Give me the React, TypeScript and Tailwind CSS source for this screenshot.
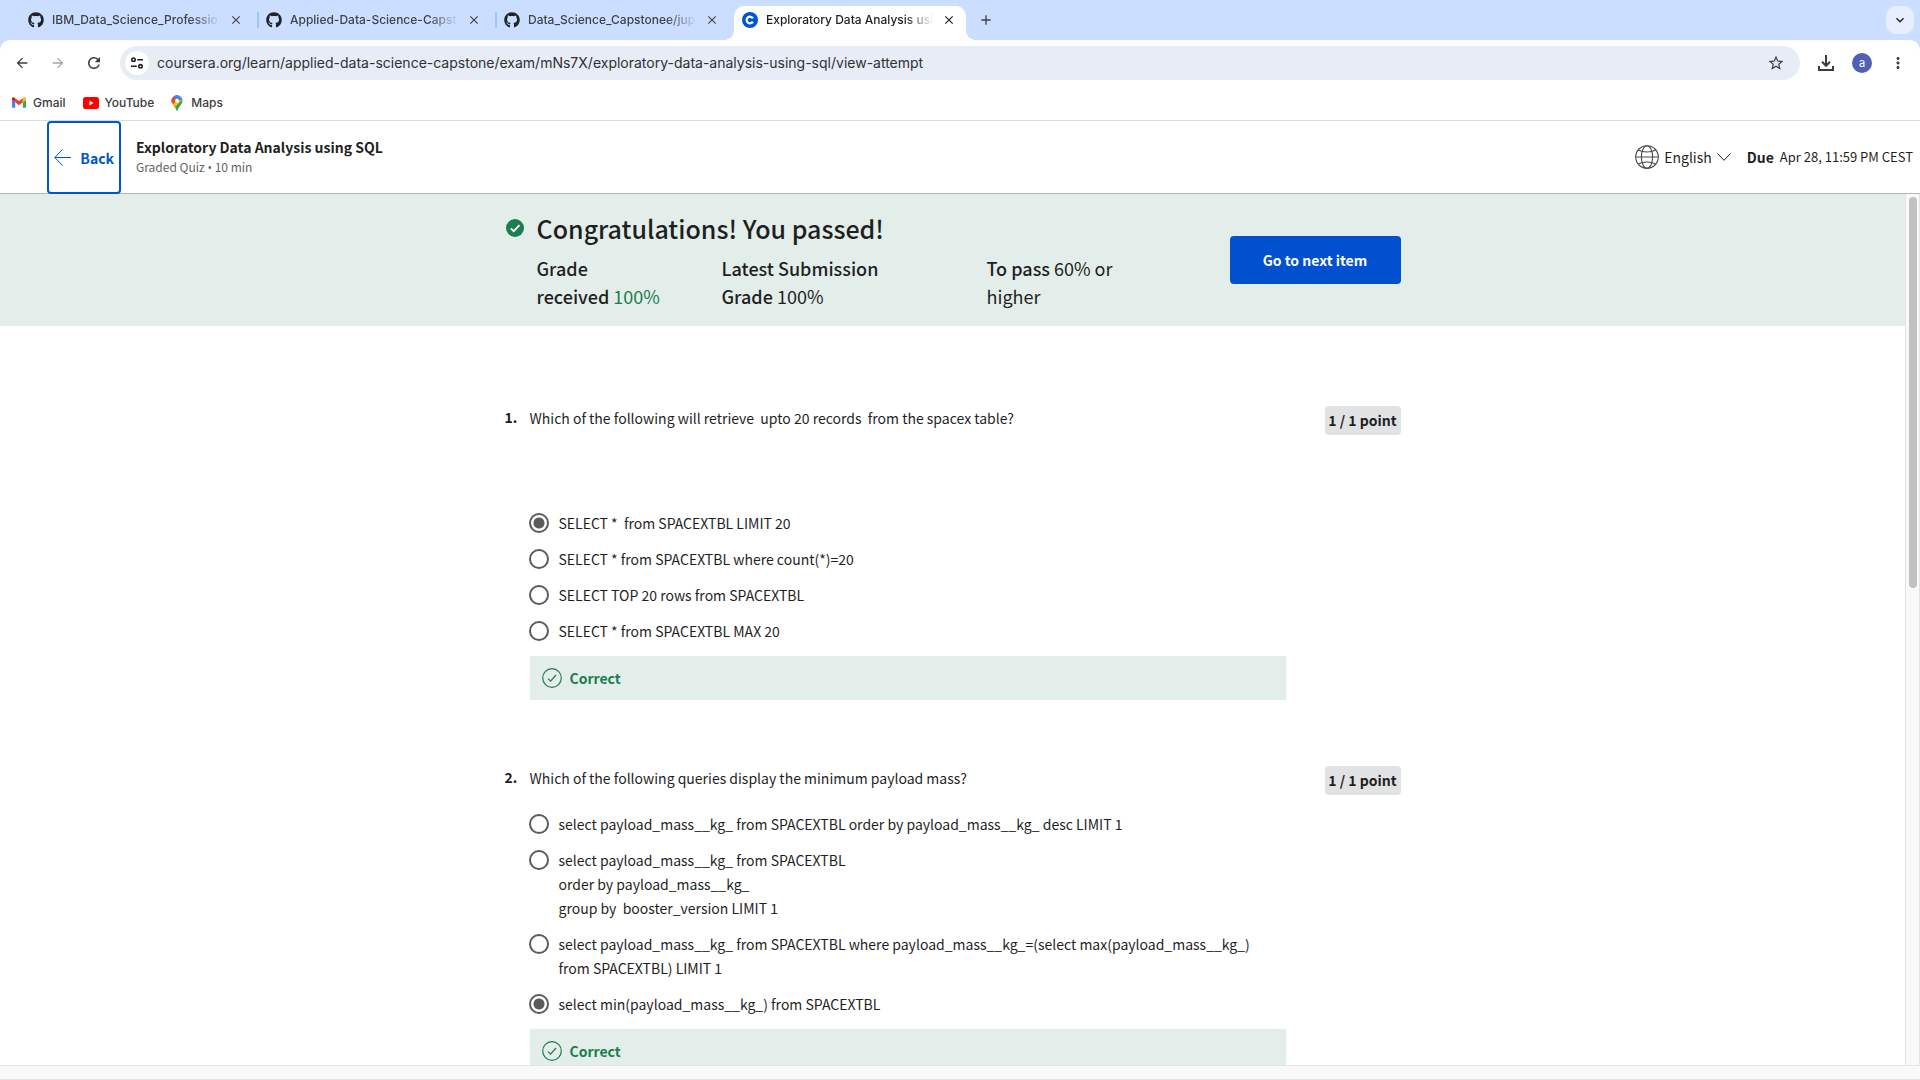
import type { ReactNode } from "react";
import { FaGithub } from "react-icons/fa";
import {
  MdArrowBack,
  MdArrowForward,
  MdClose,
  MdAdd,
  MdRefresh,
  MdMoreVert,
  MdStarBorder,
  MdKeyboardArrowDown,
} from "react-icons/md";

function CourseraIcon() {
  return (
    <svg viewBox="0 0 16 16" className="size-4 shrink-0">
      <circle cx="8" cy="8" r="8" fill="#0056d2" />
      <path d="M10.9 9.6A3.3 3.3 0 1 1 10.9 6.4" fill="none" stroke="#fff" strokeWidth="2.3" />
    </svg>
  );
}

function GmailIcon() {
  return (
    <svg viewBox="52 42 88 66" className="h-[11px] w-3.5">
      <path fill="#4285f4" d="M58 108h14V74L52 59v43c0 3.32 2.69 6 6 6" />
      <path fill="#34a853" d="M120 108h14c3.32 0 6-2.69 6-6V59l-20 15" />
      <path fill="#fbbc04" d="M120 48v26l20-15v-8c0-7.42-8.47-11.65-14.4-7.2" />
      <path fill="#ea4335" d="M72 74V48l24 18 24-18v26L96 92" />
      <path fill="#c5221f" d="M52 51v8l20 15V48l-5.6-4.2c-5.94-4.45-14.4-.22-14.4 7.2" />
    </svg>
  );
}

function YoutubeIcon() {
  return (
    <svg viewBox="0 0 16 12" className="h-3 w-4">
      <rect width="16" height="12" rx="2.8" fill="#f00" />
      <path d="M6.4 3.6v4.8L10.5 6z" fill="#fff" />
    </svg>
  );
}

function MapsIcon() {
  return (
    <svg viewBox="0 0 12 16" className="h-4 w-3">
      <defs>
        <clipPath id="pin">
          <path d="M6 .3a5.5 5.5 0 0 1 5.5 5.5c0 2.2-1.2 3.5-2.4 5C7.8 12.4 7.2 13.6 6.8 15.1c-.2.9-1.4.9-1.6 0C4.8 13.6 4.2 12.4 2.9 10.8 1.7 9.3.5 8 .5 5.8A5.5 5.5 0 0 1 6 .3z" />
        </clipPath>
      </defs>
      <g clipPath="url(#pin)">
        <rect width="12" height="16" fill="#34a853" />
        <path d="M-1 10.5 7 1l5 3-9.5 9.5z" fill="#fbbc04" />
        <path d="M-1-1h9L0 8.5z" fill="#ea4335" />
        <path d="M3-1h10v5L8 5.8 2.5 1.8z" fill="#4285f4" />
        <path d="M-1 2 1.8 1.8 6 5 2 9z" fill="#ea4335" />
      </g>
      <circle cx="6" cy="5.8" r="2" fill="#fff" />
    </svg>
  );
}

function TuneIcon() {
  return (
    <svg viewBox="0 0 14 14" className="size-3.5" fill="none" stroke="#1f1f1f" strokeWidth="1.6">
      <circle cx="3.5" cy="3.7" r="1.7" />
      <path d="M7.2 3.7H13M1 10.3h5.8" />
      <circle cx="10.5" cy="10.3" r="1.7" />
    </svg>
  );
}

function DownloadIcon() {
  return (
    <svg viewBox="0 0 16 16" className="size-4" fill="none" stroke="#3c3c3c" strokeWidth="2">
      <path d="M8 0v10.5M4 6.8l4 4 4-4M1 11v4h14v-4" />
    </svg>
  );
}

function GlobeIcon() {
  return (
    <svg viewBox="0 0 24 24" className="size-6" fill="none" stroke="#4a4a4a" strokeWidth="1.1">
      <circle cx="12" cy="12" r="11.3" />
      <ellipse cx="12" cy="12" rx="5.6" ry="11.3" />
      <path d="M.7 12h22.6M3.3 5c2.5 1.4 5.4 2 8.7 2s6.2-.6 8.7-2M3.3 19c2.5-1.4 5.4-2 8.7-2s6.2.6 8.7 2" />
    </svg>
  );
}

function CorrectIcon() {
  return (
    <svg viewBox="0 0 20 20" className="size-5 shrink-0" fill="none" stroke="#1d7c50" strokeWidth="1.2">
      <circle cx="10" cy="10" r="9.3" />
      <path d="m6 10.6 2.6 2.5L14 7" />
    </svg>
  );
}

const tabs = ["IBM_Data_Science_Professio", "Applied-Data-Science-Capst", "Data_Science_Capstonee/jup"];

const fade = "min-w-0 flex-1 overflow-hidden whitespace-nowrap text-left [mask-image:linear-gradient(to_right,#000_82%,transparent)]";

function TabStrip() {
  return (
    <div className="flex h-10 items-end bg-[#ccdeff] pl-5 pr-1.5 text-xs font-medium text-[#3f4246]">
      {tabs.map((t, i) => (
        <div key={t} className="flex h-full w-[238px] items-center">
          <button className="flex min-w-0 flex-1 items-center gap-2 pl-2">
            <FaGithub className="size-4 shrink-0 text-[#1f2328]" />
            <span className={fade}>{t}</span>
          </button>
          <button aria-label="Close tab" className="ml-2 mr-3.5">
            <MdClose className="size-3.5" />
          </button>
          <span className={i < 2 ? "-mr-px h-4 w-0.5 bg-[#a0c4ff]" : "w-px"} />
        </div>
      ))}
      <div className="relative flex h-[34px] w-[232px] items-center rounded-t-[10px] bg-white pb-1.5 text-[#1f1f1f]">
        <span className="absolute -left-2.5 bottom-0 size-2.5 bg-[radial-gradient(circle_at_0_0,#ccdeff_10px,#fff_10px)]" />
        <span className="absolute -right-2.5 bottom-0 size-2.5 bg-[radial-gradient(circle_at_100%_0,#ccdeff_10px,#fff_10px)]" />
        <button className="flex min-w-0 flex-1 items-center gap-2 pl-2">
          <CourseraIcon />
          <span className={fade}>Exploratory Data Analysis usi</span>
        </button>
        <button aria-label="Close tab" className="ml-2 mr-2.5">
          <MdClose className="size-3.5" />
        </button>
      </div>
      <button aria-label="New tab" className="flex h-full items-center pl-3">
        <MdAdd className="size-4" />
      </button>
      <button aria-label="Search tabs" className="mb-1.5 ml-auto flex size-7 items-center justify-center rounded-[10px] bg-[#e7efff] text-[#1f1f1f]">
        <MdKeyboardArrowDown className="size-4" />
      </button>
    </div>
  );
}

function Toolbar() {
  return (
    <div className="bg-[#ccdeff]">
      <div className="flex items-center rounded-t-[10px] bg-white pb-1.5 pl-3.5 pr-[13px] pt-1.5 text-[#3c3c3c]">
        <button aria-label="Back" className="mr-5">
          <MdArrowBack className="size-4" />
        </button>
        <button aria-label="Forward" className="mr-[19px] text-[#a3a5a8]">
          <MdArrowForward className="size-4" />
        </button>
        <button aria-label="Reload" className="mr-[17px]">
          <MdRefresh className="size-[18px]" />
        </button>
        <div className="flex h-[34px] flex-1 items-center rounded-full bg-[#e8ecf6] pl-[5px] pr-[15px]">
          <button aria-label="Site information" className="flex size-6 items-center justify-center rounded-full bg-white">
            <TuneIcon />
          </button>
          <input
            aria-label="Address"
            defaultValue="coursera.org/learn/applied-data-science-capstone/exam/mNs7X/exploratory-data-analysis-using-sql/view-attempt"
            className="ml-2 min-w-0 flex-1 bg-transparent text-sm text-[#2f3134] outline-none"
          />
          <button aria-label="Bookmark">
            <MdStarBorder className="size-[18px]" />
          </button>
        </div>
        <button aria-label="Downloads" className="ml-[18px]">
          <DownloadIcon />
        </button>
        <button className="ml-[18px] size-5 rounded-full bg-[#4f60b5] text-center text-[11px] leading-5 text-white">a</button>
        <button aria-label="Menu" className="ml-[17px]">
          <MdMoreVert className="size-[18px]" />
        </button>
      </div>
    </div>
  );
}

function Bookmarks() {
  return (
    <nav className="flex h-[35px] items-center gap-[17px] border-b border-[#dadce0] bg-white pb-px pl-3 text-xs font-medium text-[#3c3c3c]">
      <a href="#gmail" className="flex items-center gap-[7px]">
        <GmailIcon />
        Gmail
      </a>
      <a href="#youtube" className="flex items-center gap-1.5">
        <YoutubeIcon />
        YouTube
      </a>
      <a href="#maps" className="flex items-center gap-2">
        <MapsIcon />
        Maps
      </a>
    </nav>
  );
}

function CourseHeader() {
  return (
    <header className="flex h-[73px] items-stretch border-b border-[#b4b6b8] bg-white pl-[47px] pr-[7px]">
      <button className="-mb-px flex w-[74px] items-center justify-between rounded border-2 border-[#0056d2] px-[5px] text-sm font-bold text-[#0056d2]">
        <svg viewBox="0 0 17 17" className="size-[17px]" fill="none" stroke="currentColor" strokeWidth="1">
          <path d="M8.5.5.8 8.5l7.7 8M.8 8.5H17" />
        </svg>
        Back
      </button>
      <div className="ml-[15px] flex flex-col justify-center">
        <h2 className="text-sm font-bold leading-5">Exploratory Data Analysis using SQL</h2>
        <p className="text-xs leading-[19px] text-[#636363]">
          Graded Quiz <span className="font-['Open_Sans',sans-serif]">•</span> 10 min
        </p>
      </div>
      <div className="ml-auto flex items-center">
        <button className="flex items-center gap-[5px] text-sm">
          <GlobeIcon />
          English
          <svg viewBox="0 0 14 8" className="h-2 w-3.5" fill="none" stroke="#1f1f1f" strokeWidth="1">
            <path d="m.5.5 6.5 6.8L13.5.5" />
          </svg>
        </button>
        <span className="ml-4 text-sm font-bold">Due</span>
        <span className="ml-1.5 text-[13px]">Apr 28, 11:59 PM CEST</span>
      </div>
    </header>
  );
}

function Banner() {
  return (
    <section className="bg-[#e3eeea]">
      <div className="mx-auto flex max-w-[896px] pb-4 pt-4">
        <svg viewBox="0 0 18 18" className="ml-px mr-[13px] mt-[9px] size-[18px] shrink-0">
          <circle cx="9" cy="9" r="9" fill="#1d7c50" />
          <path d="m4.8 9.3 2.9 2.9 5.8-6" fill="none" stroke="#fff" strokeWidth="1.8" />
        </svg>
        <div className="flex-1">
          <h1 className="text-[25px] font-medium leading-9">Congratulations! You passed!</h1>
          <div className="mt-2 flex text-lg leading-7">
            <p className="w-[185px]">
              <b className="font-medium">
                Grade
                <br />
                received
              </b>{" "}
              <span className="text-[#1d7c50]">100%</span>
            </p>
            <p className="w-[265px]">
              <b className="font-medium">
                Latest Submission
                <br />
                Grade
              </b>{" "}
              100%
            </p>
            <p>
              <b className="font-medium">To pass</b> 60% or
              <br />
              higher
            </p>
          </div>
        </div>
        <button className="mt-[26px] h-12 w-[171px] rounded bg-[#0050d0] text-sm font-bold text-white">Go to next item</button>
      </div>
    </section>
  );
}

function Option({ name, checked, children }: { name: string; checked?: boolean; children: ReactNode }) {
  return (
    <label className="flex gap-2.5">
      <input
        type="radio"
        name={name}
        defaultChecked={checked}
        className="-ml-px mt-0.5 size-5 shrink-0 appearance-none rounded-full border-2 border-[#5b5b5b] bg-white checked:bg-[radial-gradient(circle,#5b5b5b_5px,#fff_6px)]"
      />
      <span className="whitespace-pre-wrap">{children}</span>
    </label>
  );
}

function Question({ n, title, spaced, children }: { n: number; title: string; spaced?: boolean; children: ReactNode }) {
  return (
    <section className="mx-auto flex w-full max-w-[896px] text-sm leading-6">
      <span className="w-[25px] shrink-0 font-bold leading-[22px]">{n}.</span>
      <div className="w-[756px]">
        <h3 className={spaced ? "mb-[81px] whitespace-pre" : "mb-[22px] whitespace-pre"}>{title}</h3>
        <div className="flex flex-col gap-3 pr-4">{children}</div>
        <div className="mt-[13px] flex h-11 items-center gap-2 bg-[#e3eeea] pl-3 font-bold text-[#1d7c50]">
          <CorrectIcon />
          Correct
        </div>
      </div>
      <span className="ml-auto h-[29px] w-[76px] rounded bg-[#e1e2e4] text-center font-bold leading-[29px]">1 / 1 point</span>
    </section>
  );
}

export default function App() {
  return (
    <div className="flex h-screen flex-col overflow-hidden bg-white font-['Inter',sans-serif] text-[#1f1f1f]">
      <TabStrip />
      <Toolbar />
      <Bookmarks />
      <div className="flex min-h-0 flex-1 flex-col font-['Noto_Sans_CJK_SC',sans-serif]">
        <CourseHeader />
        <div className="flex min-h-0 flex-1">
          <main className="min-w-0 flex-1 overflow-hidden">
            <Banner />
            <div className="flex flex-col gap-[66px] pt-20">
              <Question n={1} title="Which of the following will retrieve  upto 20 records  from the spacex table?" spaced>
                <Option name="q1" checked>{"SELECT *  from SPACEXTBL LIMIT 20"}</Option>
                <Option name="q1">SELECT * from SPACEXTBL where count(*)=20</Option>
                <Option name="q1">SELECT TOP 20 rows from SPACEXTBL</Option>
                <Option name="q1">SELECT * from SPACEXTBL MAX 20</Option>
              </Question>
              <Question n={2} title="Which of the following queries display the minimum payload mass?">
                <Option name="q2">select payload_mass__kg_ from SPACEXTBL order by payload_mass__kg_ desc LIMIT 1</Option>
                <Option name="q2">{"select payload_mass__kg_ from SPACEXTBL\norder by payload_mass__kg_\ngroup by  booster_version LIMIT 1"}</Option>
                <Option name="q2">select payload_mass__kg_ from SPACEXTBL where payload_mass__kg_=(select max(payload_mass__kg_) from SPACEXTBL) LIMIT 1</Option>
                <Option name="q2" checked>select min(payload_mass__kg_) from SPACEXTBL</Option>
              </Question>
            </div>
          </main>
          <div className="w-[15px] border-x border-[#e4e4e4] bg-[#f9f9f9] pl-[3px] pt-[3px]">
            <div className="h-[45%] w-2 rounded-full bg-[#c1c1c1]" />
          </div>
        </div>
        <div className="h-[15px] shrink-0 border-y border-[#e4e4e4] bg-[#f9f9f9]" />
      </div>
    </div>
  );
}
